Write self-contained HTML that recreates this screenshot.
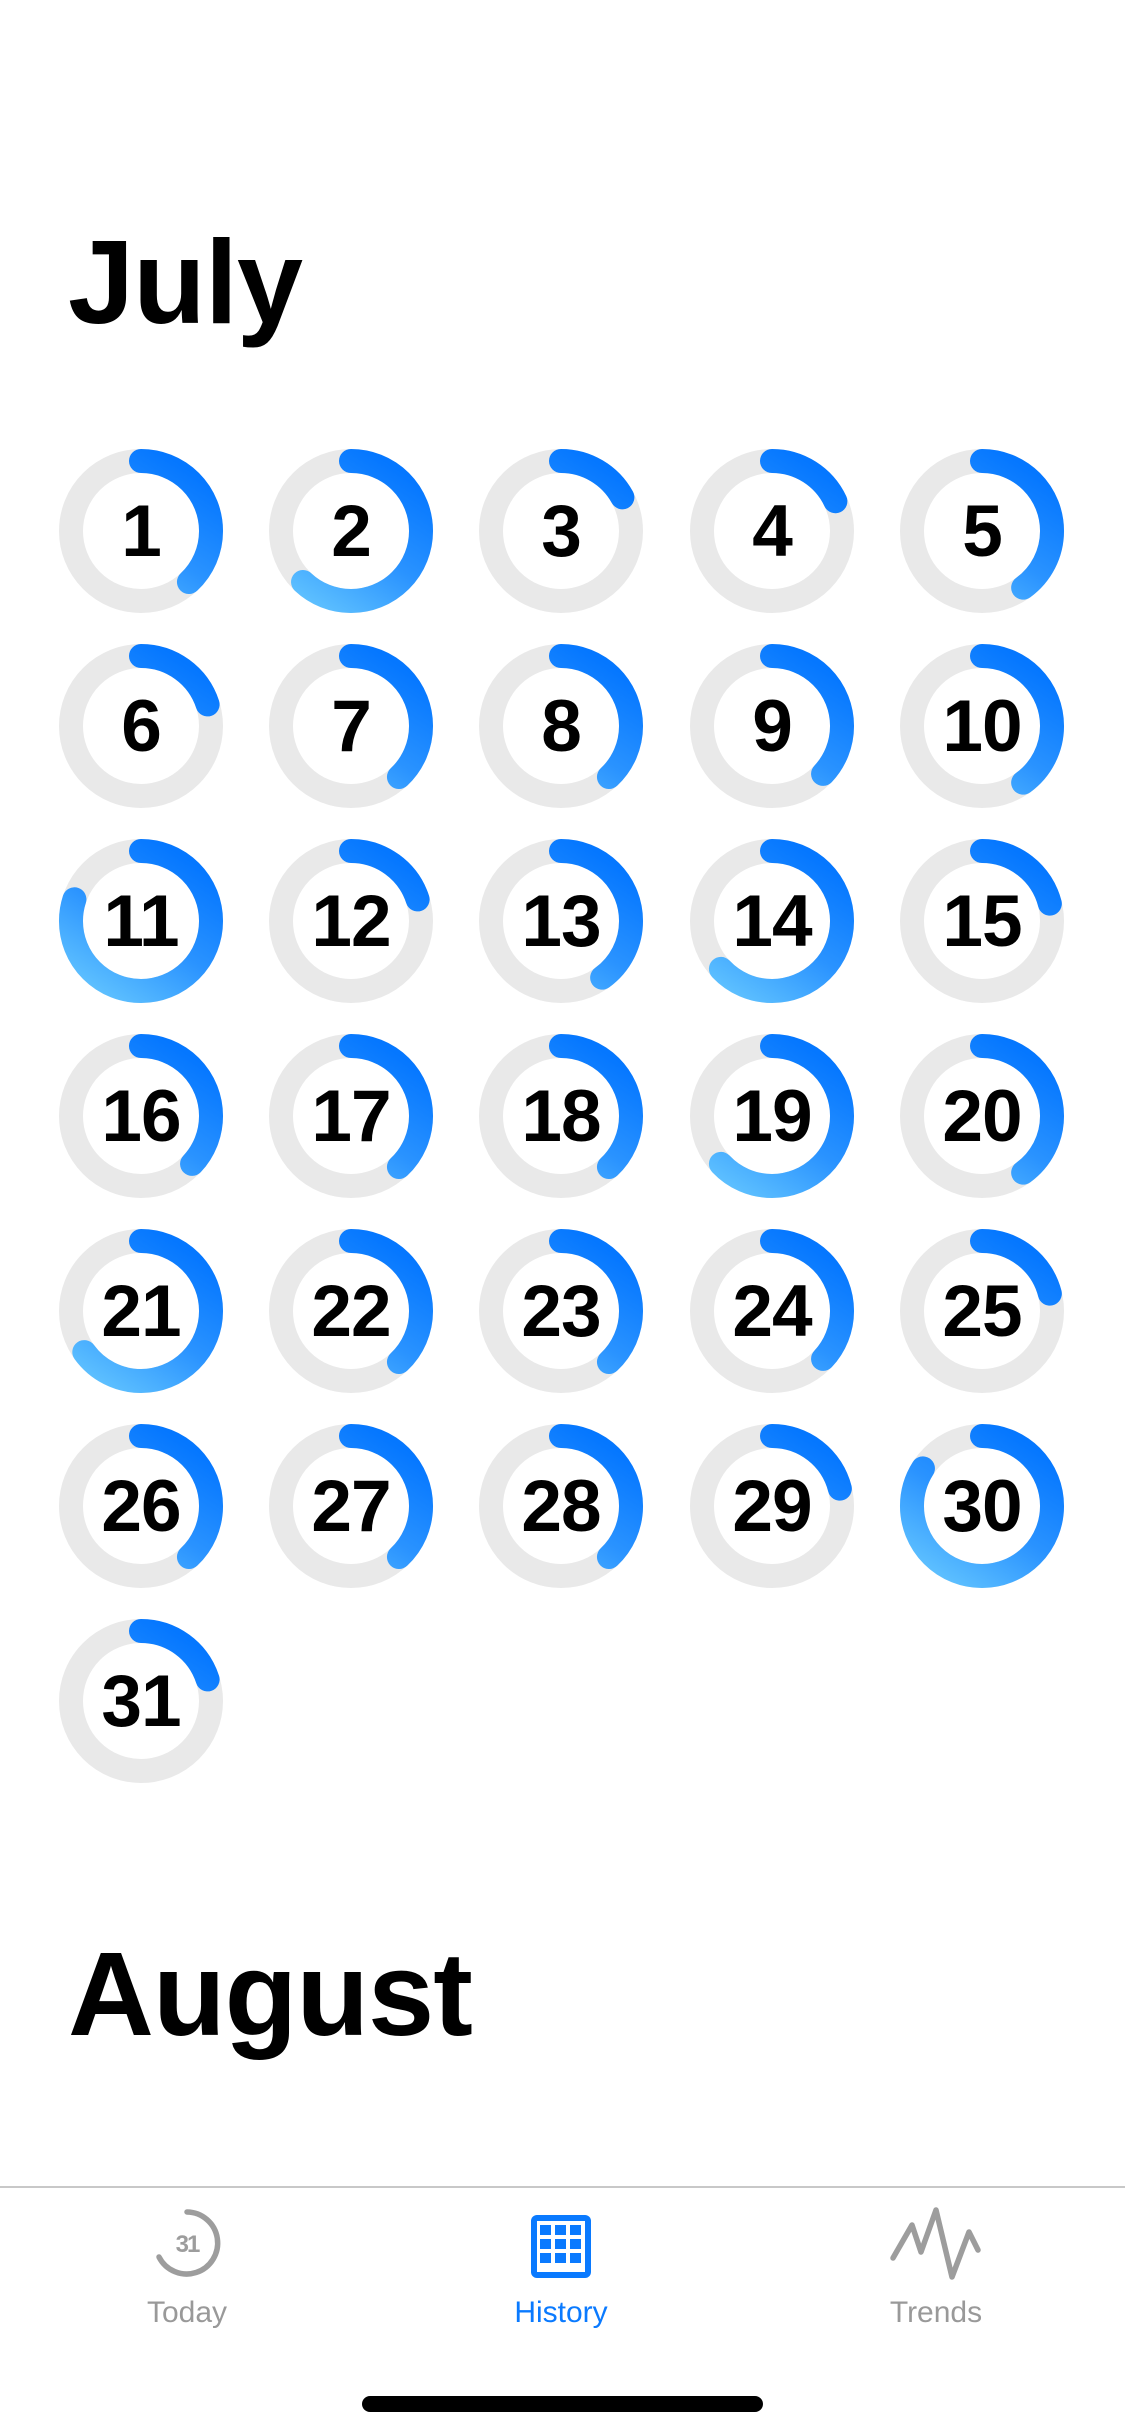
<!DOCTYPE html>
<html><head><meta charset="utf-8"><style>
html,body{margin:0;padding:0;background:#fff;}
body{width:1125px;height:2436px;position:relative;overflow:hidden;font-family:"Liberation Sans",sans-serif;}
.t{position:absolute;left:68px;font-size:119px;font-weight:bold;line-height:119px;letter-spacing:-1px;color:#000;margin:0;}
.c{position:absolute;width:170px;height:170px;}
.c svg{position:absolute;left:0;top:0;}
.c span{position:absolute;left:0;top:0;width:170px;height:170px;display:flex;align-items:center;justify-content:center;font-size:73px;font-weight:bold;line-height:73px;color:#000;letter-spacing:-1px;}
.bar{position:absolute;left:0;top:2186px;width:1125px;height:2px;background:#c8c8c8;}
.lab{position:absolute;top:2296px;font-size:30px;color:#999;width:200px;text-align:center;}
</style></head><body>
<div class="t" style="top:223px">July</div>
<div class="t" style="top:1935px">August</div>
<svg width="0" height="0" style="position:absolute"><defs>
<linearGradient id="g" gradientUnits="userSpaceOnUse" x1="110" y1="10" x2="20" y2="150"><stop offset="0" stop-color="#0577ff"/><stop offset="0.5" stop-color="#2a93ff"/><stop offset="1" stop-color="#62c4ff"/></linearGradient>
</defs></svg>
<div id="grid"></div>
<script>
var f=[0.38,0.62,0.17,0.18,0.4,0.2,0.38,0.38,0.37,0.4,0.8,0.2,0.4,0.63,0.21,0.37,0.38,0.38,0.63,0.4,0.65,0.38,0.38,0.37,0.21,0.38,0.38,0.38,0.21,0.84,0.2];
var xs=[141,351,561,772,982],ys=[531,726,921,1116,1311,1506,1701];
var C=2*Math.PI*70,h='';
for(var i=0;i<31;i++){var x=xs[i%5]-85,y=ys[Math.floor(i/5)]-85,L=f[i]*C;
h+='<div class="c" style="left:'+x+'px;top:'+y+'px"><svg width="170" height="170" viewBox="0 0 170 170"><circle cx="85" cy="85" r="70" fill="none" stroke="#e9e9e9" stroke-width="24"/><path d="M85 15 A70 70 0 1 1 85 155 A70 70 0 1 1 85 15" fill="none" stroke="url(#g)" stroke-width="24" stroke-linecap="round" stroke-dasharray="'+L.toFixed(1)+' 1000"/></svg><span>'+(i+1)+'</span></div>';}
document.getElementById('grid').innerHTML=h;
</script>
<div class="bar"></div>
<svg style="position:absolute;left:147px;top:2203px" width="80" height="80" viewBox="0 0 80 80">
<path d="M40 9 A31 31 0 1 1 12 54" fill="none" stroke="#9d9d9d" stroke-width="5.5" stroke-linecap="round"/>
<text x="40" y="49" font-family="Liberation Sans" font-weight="bold" font-size="24" fill="#9d9d9d" text-anchor="middle" letter-spacing="-2">31</text>
</svg>
<div class="lab" style="left:87px">Today</div>
<svg style="position:absolute;left:528px;top:2212px" width="66" height="66" viewBox="0 0 66 66">
<rect x="3" y="3" width="60" height="63" rx="6" fill="#0a7aff"/>
<rect x="9" y="9" width="48" height="51" fill="#fff"/>
<g fill="#0a7aff">
<rect x="12" y="13" width="11" height="10"/><rect x="27" y="13" width="11" height="10"/><rect x="42" y="13" width="11" height="10"/>
<rect x="12" y="27" width="11" height="10"/><rect x="27" y="27" width="11" height="10"/><rect x="42" y="27" width="11" height="10"/>
<rect x="12" y="41" width="11" height="10"/><rect x="27" y="41" width="11" height="10"/><rect x="42" y="41" width="11" height="10"/>
</g></svg>
<div class="lab" style="left:461px;color:#0a7aff">History</div>
<svg style="position:absolute;left:885px;top:2200px" width="100" height="90" viewBox="0 0 100 90">
<path d="M8 58 L27 25 L36 52 L51 10 L67 77 L84 32 L93 50" fill="none" stroke="#9d9d9d" stroke-width="5.5" stroke-linecap="round" stroke-linejoin="round"/>
</svg>
<div class="lab" style="left:836px">Trends</div>
<div style="position:absolute;left:362px;top:2396px;width:401px;height:16px;border-radius:8px;background:#000"></div>
</body></html>
